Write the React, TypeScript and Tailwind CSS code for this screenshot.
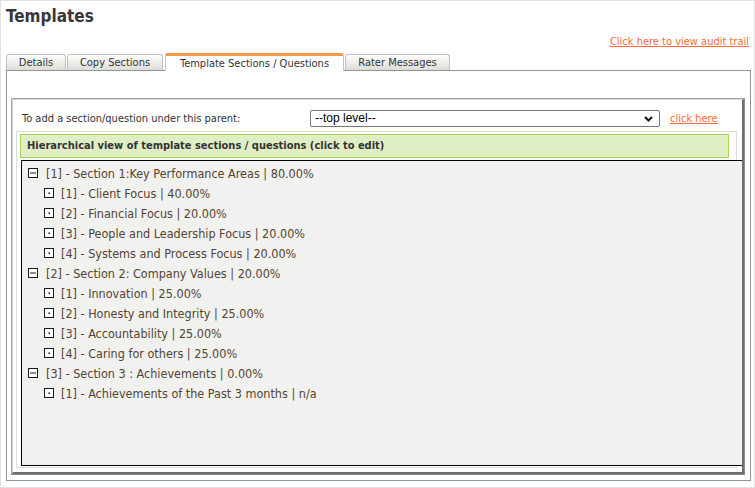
import React from "react";

const FONT = "font-['DejaVu_Sans_Condensed','DejaVu_Sans',sans-serif]";

function MinusBox() {
  return (
    <svg width="10" height="10" viewBox="0 0 10 10" className="shrink-0">
      <rect x="0.5" y="0.5" width="9" height="9" fill="#ffffff" stroke="#1a1a1a" />
      <rect x="2" y="4.5" width="6" height="1" fill="#1a1a1a" />
    </svg>
  );
}

function DotBox() {
  return (
    <svg width="10" height="10" viewBox="0 0 10 10" className="shrink-0">
      <rect x="0.5" y="0.5" width="9" height="9" fill="#ffffff" stroke="#1a1a1a" />
      <rect x="4.5" y="4.5" width="1.5" height="1.5" fill="#1a1a1a" />
    </svg>
  );
}

type Node = { label: string; children?: string[] };

const tree: Node[] = [
  {
    label: "[1] - Section 1:Key Performance Areas | 80.00%",
    children: [
      "[1] - Client Focus | 40.00%",
      "[2] - Financial Focus | 20.00%",
      "[3] - People and Leadership Focus | 20.00%",
      "[4] - Systems and Process Focus | 20.00%",
    ],
  },
  {
    label: "[2] - Section 2: Company Values | 20.00%",
    children: [
      "[1] - Innovation | 25.00%",
      "[2] - Honesty and Integrity | 25.00%",
      "[3] - Accountability | 25.00%",
      "[4] - Caring for others | 25.00%",
    ],
  },
  {
    label: "[3] - Section 3 : Achievements | 0.00%",
    children: ["[1] - Achievements of the Past 3 months | n/a"],
  },
];

function Tab({ label, width, active, className = "" }: { label: string; width: number; active?: boolean; className?: string }) {
  if (active) {
    return (
      <div
        className={`h-[18px] flex items-center justify-center bg-white border-t-[3px] border-t-[#f39a46] border-x border-x-[#c4c4c4] rounded-t-[3px] text-[#333] -mb-px relative z-10 ${className}`}
        style={{ width }}
      >
        <span className="leading-[14px] pt-[1px]">{label}</span>
      </div>
    );
  }
  return (
    <div
      className={`h-[16px] flex items-center justify-center bg-gradient-to-b from-white to-[#dddcd6] border-t border-x border-[#c2c2c2] rounded-t-[3px] text-[#333] ${className}`}
      style={{ width }}
    >
      <span className="leading-[14px] pt-[1px]">{label}</span>
    </div>
  );
}

export default function App() {
  return (
    <div className={`w-[755px] h-[488px] bg-white border border-[#e4e0e6] ${FONT} text-[11px] text-[#333] flex flex-col overflow-hidden`}>
      <div className="h-[29px] pl-[5px] pt-[4px]">
        <h1 className="text-[17px] font-bold leading-[22px] text-[#383838]">Templates</h1>
      </div>
      <div className="h-[22px] flex justify-end pr-[5px] pt-[5px]">
        <a className="text-[#fb6a3c] underline leading-[14px] cursor-pointer">Click here to view audit trail</a>
      </div>
      <div className="h-[18px] flex items-end pl-[5px]">
        <Tab label="Details" width={60} />
        <Tab label="Copy Sections" width={96} className="ml-[1px]" />
        <Tab label="Template Sections / Questions" width={179} active className="ml-[2px]" />
        <Tab label="Rater Messages" width={105} className="ml-[1px]" />
      </div>
      <div className="ml-[5px] w-[745px] h-[411px] border border-[#8e9898] bg-white pl-[4px] pt-[27px]">
        <div className="w-[734px] h-[377px] border border-[#a2a6a6] border-r-[#8a8a8a] border-b-[#8a8a8a]">
          <div className="w-full h-full border-t border-l border-t-[#d4d4d4] border-l-[#d4d4d4] border-r-2 border-b-2 border-r-[#6e6e6e] border-b-[#6e6e6e] bg-white overflow-hidden pt-[10px] pl-[3px]">
            <div className="h-[17px] flex items-center">
              <div className="w-[294px] pl-[6px] pt-[1px] text-[#333]">To add a section/question under this parent:</div>
              <div className="w-[350px] h-[17px] border border-[#767676] rounded-[2px] bg-white flex items-center justify-between pl-[4px] pr-[6px] font-['Liberation_Sans',sans-serif] text-[12px] text-black">
                <span className="leading-[15px]">--top level--</span>
                <svg width="9" height="6" viewBox="0 0 9 6">
                  <path d="M1 1 L4.5 4.5 L8 1" fill="none" stroke="#111" strokeWidth="2" />
                </svg>
              </div>
              <a className="ml-[10px] text-[#fb6a3c] underline cursor-pointer leading-[14px]">click here</a>
            </div>
            <div className="mt-[4px] w-[721px] h-[337px] border border-[#dcdcdc] pt-[2px] pl-[3px]">
              <div className="w-[709px] h-[24px] bg-[#e0eec6] border border-[#a6d55a] flex items-center pl-[6px] font-bold text-[#333]">
                Hierarchical view of template sections / questions (click to edit)
              </div>
              <div className="mt-[2px] ml-[1px] w-[722px] h-[306px] border-t border-l border-b border-black bg-[#f1f1ef] pt-[2px] text-[12.5px] text-[#54442f]">
                {tree.map((n) => (
                  <div key={n.label}>
                    <div className="h-[20px] flex items-center pl-[6px] gap-[8px]">
                      <MinusBox />
                      <span className="leading-[15px]">{n.label}</span>
                    </div>
                    {n.children?.map((c) => (
                      <div key={c} className="h-[20px] flex items-center pl-[22px] gap-[7px]">
                        <DotBox />
                        <span className="leading-[15px]">{c}</span>
                      </div>
                    ))}
                  </div>
                ))}
              </div>
            </div>
          </div>
        </div>
      </div>
    </div>
  );
}
